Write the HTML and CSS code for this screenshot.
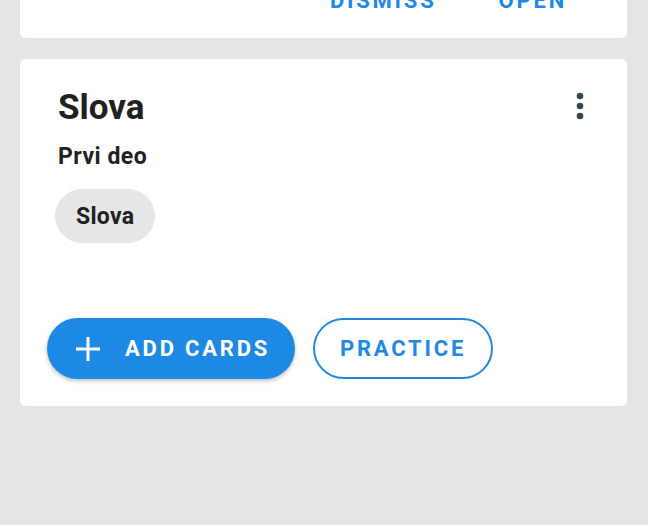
FILE: index.html
```html
<!DOCTYPE html>
<html lang="en">
<head>
  <meta charset="UTF-8" />
  <meta name="viewport" content="width=device-width, initial-scale=1" />
  <title>Decks</title>
  <link rel="stylesheet" href="styles.css">
</head>
<body>
  <div class="feed">

    <!-- Previous card (scrolled off the top) -->
    <div class="card card-prev">
      <div class="card-actions">
        <span class="text-btn">DISMISS</span>
        <span class="text-btn">OPEN</span>
      </div>
    </div>

    <!-- Deck card -->
    <div class="card deck">
      <div class="deck-head">
        <div class="deck-info">
          <h1 class="deck-title">Slova</h1>
          <div class="deck-sub">Prvi deo</div>
          <div class="chips">
            <span class="chip">Slova</span>
          </div>
        </div>
        <svg class="menu-icon" viewBox="0 0 24 24" width="40" height="40" aria-hidden="true">
          <circle cx="12" cy="6" r="2" />
          <circle cx="12" cy="12" r="2" />
          <circle cx="12" cy="18" r="2" />
        </svg>
      </div>

      <div class="deck-buttons">
        <button class="btn btn-filled">
          <svg class="plus" viewBox="0 0 24 24" width="24" height="24" aria-hidden="true">
            <path d="M12 0v24M0 12h24" />
          </svg>
          <span>ADD CARDS</span>
        </button>
        <button class="btn btn-outline">PRACTICE</button>
      </div>
    </div>

  </div>
</body>
</html>
```

FILE: styles.css
```css
/* — Base — */
* { box-sizing: border-box; margin: 0; padding: 0; }
body {
  font-family: Roboto, "Liberation Sans", sans-serif;
  background: #e4e4e4;
  color: #212121;
  overflow: hidden;
}

.feed {
  display: flex; flex-direction: column; gap: 21px;
  padding: 0 21px 0 20px;
}

/* — Cards — */
.card {
  background: #fff;
  border-radius: 6px;
}
.card-prev {
  margin-top: -40px;
  padding: 25px 60px 21px 0;
}
.card-actions {
  display: flex; justify-content: flex-end; gap: 62px;
}
.text-btn {
  font-size: 22px; font-weight: 700; letter-spacing: 2.8px;
  color: #1e88e5; line-height: 32px;
}

/* — Deck card — */
.deck { padding: 29px 0 27px 27px; }
.deck-head {
  display: flex; justify-content: space-between; align-items: flex-start;
  padding-left: 11px;
}
.deck-title {
  font-size: 35px; font-weight: 700; line-height: 40px;
}
.deck-sub {
  font-size: 23px; font-weight: 700; line-height: 30px;
  margin-top: 14px; letter-spacing: 0.5px;
}
.chips { display: flex; gap: 8px; margin: 17px 0 0 -3px; }
.chip {
  display: inline-flex; align-items: center;
  height: 54px; padding: 0 21px;
  border-radius: 27px;
  background: #e6e6e6;
  font-size: 23px; font-weight: 700; letter-spacing: 0.3px;
}
.menu-icon { fill: #37474f; margin: -2px 27px 0 0; }

.deck-buttons {
  display: flex; gap: 18px;
  margin-top: 75px;
}
.btn {
  font-family: inherit;
  display: inline-flex; align-items: center; justify-content: center;
  height: 61px; border-radius: 31px;
  font-size: 22px; font-weight: 700; letter-spacing: 2.8px;
  white-space: nowrap;
  cursor: pointer;
}
.btn-filled {
  width: 248px; gap: 25px;
  justify-content: flex-start;
  padding: 0 0 0 29px;
  background: #1e88e5; color: #fff; border: none;
  box-shadow: 0 2px 4px rgba(0,0,0,0.25);
}
.plus { stroke: #fff; stroke-width: 3; flex: none; }
.btn-outline {
  width: 180px;
  background: #fff; color: #1e88e5;
  border: 2px solid #1e88e5;
}
```
